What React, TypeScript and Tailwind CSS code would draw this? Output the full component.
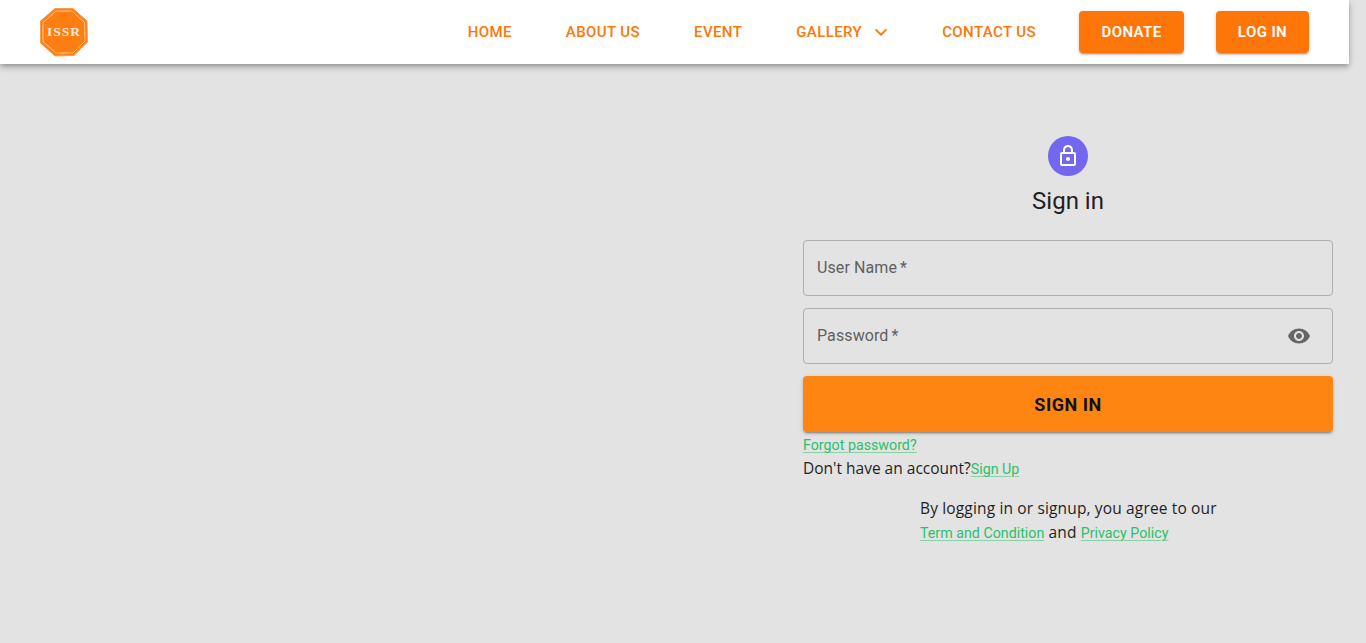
import React from "react";

const roboto = "font-['Roboto',sans-serif]";

function Logo() {
  return (
    <svg width="50" height="50" viewBox="0 0 50 50" aria-label="ISSR logo">
      <polygon points="16,1.5 34,1.5 48,14 48.5,35 35,48.5 16,49 1.5,36 1.5,14" fill="#ff7e12" stroke="#ff9a45" strokeWidth="1" />
      <polygon points="17,4 33,4 45.5,15.5 46,34 34,46 17,46 4,34.5 4,15.5" fill="none" stroke="#ffdcc0" strokeWidth="0.8" />
      <text x="25" y="29" textAnchor="middle" fontFamily="'Liberation Serif',serif" fontWeight="700" fontSize="13.5" letterSpacing="1" fill="#ffeedd">ISSR</text>
    </svg>
  );
}

function NavLink({ children }: { children: React.ReactNode }) {
  return <a className="text-[15px] font-medium tracking-[0.4px] text-[#ff7608] leading-[24px]">{children}</a>;
}

function Field({ label, eye }: { label: string; eye?: boolean }) {
  return (
    <div className="h-14 w-full rounded border border-[#aeaeae] flex items-center justify-between pl-[13px] pr-[21px]">
      <span className="text-[16px] tracking-[0.1px] text-[#5f5f5f]">{label}<span className="ml-[3px]">*</span></span>
      {eye && (
        <svg width="24" height="24" viewBox="0 0 24 24" fill="#666666">
          <path d="M12 4.5C7 4.5 2.73 7.61 1 12c1.73 4.39 6 7.5 11 7.5s9.27-3.11 11-7.5c-1.73-4.39-6-7.5-11-7.5zM12 17c-2.76 0-5-2.24-5-5s2.24-5 5-5 5 2.24 5 5-2.24 5-5 5zm0-8c-1.66 0-3 1.34-3 3s1.34 3 3 3 3-1.34 3-3-1.34-3-3-3z" />
        </svg>
      )}
    </div>
  );
}

function GreenLink({ children }: { children: React.ReactNode }) {
  return <a className={`${roboto} text-[14.25px] tracking-normal text-[#2cbf68] underline decoration-[#2cbf68]/50 underline-offset-2 decoration-1`}>{children}</a>;
}

export default function App() {
  return (
    <div className={`${roboto} min-h-[643px] bg-[#e3e3e3] flex flex-col`}>
      <header className="h-16 w-[1349px] bg-white shadow-[0_2px_4px_-1px_rgba(0,0,0,0.2),0_4px_5px_0_rgba(0,0,0,0.14),0_1px_10px_0_rgba(0,0,0,0.12)] flex items-center justify-between pl-[39px] pr-10">
        <Logo />
        <nav className="flex items-center">
          <NavLink>HOME</NavLink>
          <div className="ml-[54px]"><NavLink>ABOUT US</NavLink></div>
          <div className="ml-[54px]"><NavLink>EVENT</NavLink></div>
          <div className="ml-[54px] flex items-center gap-[11px]">
            <NavLink>GALLERY</NavLink>
            <svg width="16" height="16" viewBox="0 0 16 16" fill="none" stroke="#ff7608" strokeWidth="1.9"><path d="M2.6 5.4 8 10.6l5.4-5.2" /></svg>
          </div>
          <div className="ml-[53px]"><NavLink>CONTACT US</NavLink></div>
          <button className="ml-[43px] h-[42px] w-[105px] rounded bg-[#ff7608] text-white text-[15px] font-semibold tracking-[0.4px] shadow-[0_3px_1px_-2px_rgba(0,0,0,0.2),0_2px_2px_0_rgba(0,0,0,0.14),0_1px_5px_0_rgba(0,0,0,0.12)]">DONATE</button>
          <button className="ml-8 h-[42px] w-[93px] rounded bg-[#ff7608] text-white text-[15px] font-semibold tracking-[0.4px] shadow-[0_3px_1px_-2px_rgba(0,0,0,0.2),0_2px_2px_0_rgba(0,0,0,0.14),0_1px_5px_0_rgba(0,0,0,0.12)]">LOG IN</button>
        </nav>
      </header>
      <main className="flex justify-end pr-[33px]">
        <section className="w-[530px] flex flex-col pt-[72px]">
          <div className="flex flex-col items-center">
            <div className="w-10 h-10 rounded-full bg-[#7367f0] flex items-center justify-center">
              <svg width="24" height="24" viewBox="0 0 24 24" fill="#ffffff">
                <path d="M18 8h-1V6c0-2.76-2.24-5-5-5S7 3.24 7 6v2H6c-1.1 0-2 .9-2 2v10c0 1.1.9 2 2 2h12c1.1 0 2-.9 2-2V10c0-1.1-.9-2-2-2zM9 6c0-1.66 1.34-3 3-3s3 1.34 3 3v2H9V6zm9 14H6V10h12v10zm-6-3c1.1 0 2-.9 2-2s-.9-2-2-2-2 .9-2 2 .9 2 2 2z" />
              </svg>
            </div>
            <h1 className="mt-2 text-[24px] leading-[34px] text-[#1f1f1f]">Sign in</h1>
          </div>
          <div className="mt-[22px] flex flex-col gap-3">
            <Field label="User Name" />
            <Field label="Password" eye />
            <button className="h-14 w-full rounded bg-[#ff8513] text-[#111111] text-[18px] font-bold tracking-[0.5px] shadow-[0_3px_1px_-2px_rgba(0,0,0,0.2),0_2px_2px_0_rgba(0,0,0,0.14),0_1px_5px_0_rgba(0,0,0,0.12)]">SIGN IN</button>
          </div>
          <div className="mt-[3px] leading-[20px] flex"><GreenLink>Forgot password?</GreenLink></div>
          <div className="mt-px leading-[24px] text-[15.5px] font-['Open_Sans','Noto_Sans',sans-serif] text-[#1f1f1f]">
            Don't have an account?<GreenLink>Sign Up</GreenLink>
          </div>
          <div className="mt-[15px] ml-[117px] text-[15.5px] tracking-[0.15px] leading-[24px] font-['Open_Sans','Noto_Sans',sans-serif] text-[#1f1f1f]">
            <div>By logging in or signup, you agree to our</div>
            <div><GreenLink>Term and Condition</GreenLink> and <GreenLink>Privacy Policy</GreenLink></div>
          </div>
        </section>
      </main>
    </div>
  );
}
